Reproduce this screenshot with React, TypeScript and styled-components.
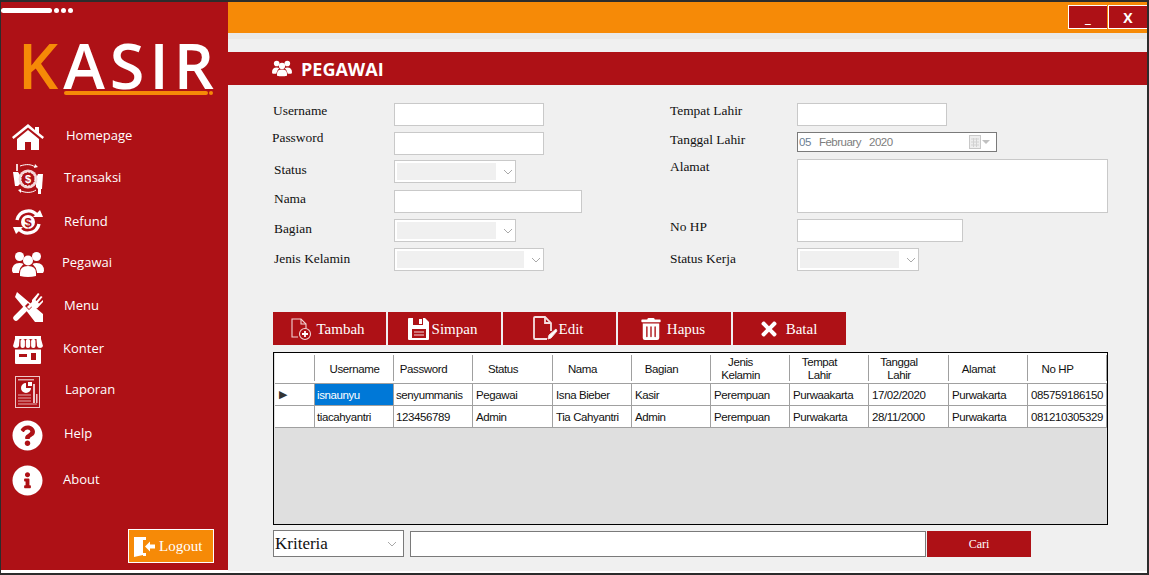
import React from "react";
import styled, { createGlobalStyle } from "styled-components";
import { FaQuestionCircle, FaInfoCircle, FaTrashAlt, FaTimes } from "react-icons/fa";

const Global = createGlobalStyle`
  html, body { margin: 0; padding: 0; background: #2c2c2c; overflow: hidden; }
  * { box-sizing: border-box; }
`;

const RED = "#ae1116";
const ORANGE = "#f68a07";
const LINE = "#c9c9c9";
const SERIF = `"Liberation Serif", serif`;
const SANS = `"Liberation Sans", sans-serif`;

const HomeIcon = () => (
  <svg width="32" height="26" viewBox="0 0 32 26" fill="#fff">
    <path d="M16 0L0 13l1.500 2L16 3.500 30.500 15l1.500-2-5-4V3h-4v3z" />
    <path d="M16 6L5 15v11h8v-8h6v8h8V15z" />
  </svg>
);

const TransaksiIcon = () => (
  <svg width="32" height="32" viewBox="0 0 32 32" fill="none">
    <path d="M1 9h5l2 3v9l-2 2H3z" fill="#fff" />
    <path d="M31 11h-5l-2 4v9l2 2h4z" fill="#fff" />
    <circle cx="16" cy="16" r="9.500" fill="#f3d5d6" />
    <circle cx="16" cy="16" r="7" fill={RED} stroke="#fff" strokeWidth="1" strokeDasharray="2 1" />
    <text x="16" y="20" fontSize="11" fontWeight="700" textAnchor="middle" fill="#fff" fontFamily="Liberation Sans">$</text>
    <path d="M8 3c6-2 11-2 15 1M9 28c5 2 11 2 15-1" stroke="#fff" strokeWidth="1" />
    <path d="M23 1l3 3-4 1zM9 26l-3 1 3 3z" fill="#fff" />
    <rect x="4" y="1" width="2" height="7" fill="#f3d5d6" />
    <rect x="26" y="26" width="3" height="5" fill="#fff" />
  </svg>
);

const RefundIcon = () => (
  <svg width="32" height="28" viewBox="0 0 32 28" fill="none">
    <path d="M5 12A11.500 11.500 0 0 1 25 7" stroke="#fff" strokeWidth="3.400" />
    <path d="M27 16A11.500 11.500 0 0 1 7 21" stroke="#fff" strokeWidth="3.400" />
    <path d="M21 9h10l-3-7zM11 19H1l3 7z" fill="#fff" />
    <circle cx="16" cy="14" r="7" fill="#fff" />
    <text x="16" y="19" fontSize="13" fontWeight="700" textAnchor="middle" fill={RED} fontFamily="Liberation Sans">$</text>
  </svg>
);

const UsersIcon = ({ w = 32 }: { w?: number }) => (
  <svg width={w} height={(w * 26) / 32} viewBox="0 0 32 26" fill="#fff">
    <circle cx="7.500" cy="5.500" r="4.500" />
    <circle cx="24.500" cy="5.500" r="4.500" />
    <path d="M0 20q0-8 7.500-8 2.500 0 4 1-3.500 3-4.500 8v1H1z" />
    <path d="M32 20q0-8-7.500-8-2.500 0-4 1 3.500 3 4.500 8v1h6z" />
    <circle cx="16" cy="9.500" r="5" />
    <path d="M8 25v-3q0-7 8-7t8 7v3q-8 2-16 0z" />
  </svg>
);

const MenuIcon = () => (
  <svg width="30" height="30" viewBox="0 0 30 30" fill="#fff">
    <path d="M4 0L30 22v8h-8L12 17 2 5z" />
    <path d="M3 26l11-11" stroke="#fff" strokeWidth="5.500" strokeLinecap="round" />
    <path d="M12 14l4 4 3-3-4-4z" fill={RED} />
    <path d="M15 16l6-6" stroke="#fff" strokeWidth="3" />
    <path d="M19 8l6-7 1.500 1-4 6 1 1 4.500-5 1.500 1-4.500 5.500 1 1L30 8l.500 1.500-6 6.500q-3 1.500-5.500-1z" />
  </svg>
);

const StoreIcon = () => (
  <svg width="30" height="28" viewBox="0 0 30 28" fill="#fff">
    <rect x="2" y="0" width="26" height="3" />
    <path d="M2 3h4.500l-.5 7q-.5 2-3 2T0 10z" />
    <rect x="7.500" y="3" width="4.400" height="9" rx="2" />
    <rect x="12.800" y="3" width="4.400" height="9" rx="2" />
    <rect x="18.100" y="3" width="4.400" height="9" rx="2" />
    <path d="M28 3h-4.500l.5 7q.5 2 3 2t3-2z" />
    <path d="M2 13.500h26V27q0 1-1 1H3q-1 0-1-1z" />
    <rect x="6" y="18" width="8" height="3" fill={RED} />
    <rect x="18" y="17" width="5" height="7" fill={RED} />
  </svg>
);

const LaporanIcon = () => (
  <svg width="26" height="32" viewBox="0 0 26 32" fill="none">
    <rect x="0.500" y="0.500" width="24" height="31" fill={RED} stroke="#eec7c8" />
    <rect x="3" y="3" width="16" height="1.500" fill="#e3a8aa" />
    <path d="M11 7a5 5 0 1 0 5 5h-5z" fill="#fff" />
    <path d="M13 6h4v4h-4z" fill="#fff" />
    <rect x="18" y="8" width="2" height="19" fill="#eec7c8" />
    <rect x="21" y="18" width="1.500" height="9" fill="#eec7c8" />
    <path d="M3 19h13M3 22h13M3 25h13M3 28h19" stroke="#e3a8aa" strokeWidth="1.200" />
  </svg>
);

const DoorIcon = () => (
  <svg width="21" height="21" viewBox="0 0 21 21" fill="#fff">
    <path d="M0 1h12v3H9v13h3v3H9v-1l-9 2z" />
    <path d="M11 10.500l5-5v3h5v4h-5v3z" />
  </svg>
);

const FilePlusIcon = () => (
  <svg width="24" height="24" viewBox="0 0 24 24" fill="none" stroke="#f3d5d6" strokeWidth="1.100">
    <path d="M8 20H2V2h9l5 5v5" />
    <path d="M11 2v5h5" />
    <circle cx="15" cy="17" r="5.500" fill={RED} />
    <path d="M15 14v6M12 17h6" stroke="#fff" strokeWidth="1.800" />
  </svg>
);

const SaveIcon = () => (
  <svg width="22" height="24" viewBox="0 0 22 24" fill="#fff">
    <path d="M1 1h16l4 4v17q0 1-1 1H1q-1 0-1-1V2q0-1 1-1z" />
    <rect x="5" y="1" width="10" height="7" fill={RED} />
    <rect x="11" y="2" width="3" height="5" fill="#fff" />
    <rect x="4" y="12" width="14" height="9" fill={RED} />
    <path d="M6 15h10M6 18h10" stroke="#f3d5d6" strokeWidth="1.200" />
  </svg>
);

const FileEditIcon = () => (
  <svg width="26" height="26" viewBox="0 0 26 26" fill="none" stroke="#f5dfe0" strokeWidth="1.800">
    <path d="M15 23H3q-1 0-1-1V2q0-1 1-1h10l6 6v8" />
    <path d="M13 1v6h6" />
    <path d="M16 23l1-4 7-6 1 2-6 7z" fill="#fff" strokeWidth="1" />
  </svg>
);

const CalendarIcon = () => (
  <svg width="12" height="14" viewBox="0 0 12 14">
    <rect x="0.500" y="0.500" width="11" height="13" fill="#eeeeee" stroke="#c8c8c8" />
    <path d="M2 4h8M2 7h8M2 10h8M4.500 3v9M7.500 3v9" stroke="#d2d2d2" strokeWidth="1" />
  </svg>
);

const Chevron = () => (
  <svg width="10" height="6" viewBox="0 0 10 6" fill="none">
    <path d="M1 1l4 4 4-4" stroke="#a9a9a9" strokeWidth="1" />
  </svg>
);

const Page = styled.div`
  width: 1149px;
  height: 575px;
  padding: 2px 2px 2px 1px;
`;

const Frame = styled.div`
  height: 571px;
  display: flex;
  background: #fff;
`;

const Sidebar = styled.aside`
  width: 227px;
  height: 568px;
  flex: none;
  background: ${RED};
  display: flex;
  flex-direction: column;
`;

const LoadBar = styled.div`
  height: 5px;
  margin-top: 6px;
  display: flex;
  gap: 2px;
`;

const Dash = styled.span<{ $w: number }>`
  width: ${(p) => p.$w}px;
  height: 5px;
  border-radius: 3px;
  background: #fff;
`;

const Logo = styled.div`
  margin: 26px 0 0 17px;
  font-family: "Open Sans", sans-serif;
  font-weight: 600;
  font-size: 63px;
  line-height: 52px;
  height: 52px;
  color: #fff;
  letter-spacing: 5px;
  white-space: nowrap;
`;

const LogoK = styled.span`
  color: ${ORANGE};
`;

const LogoRule = styled.div`
  margin: 0 0 0 63px;
  display: flex;
  gap: 1px;
  height: 4px;
`;

const RuleBar = styled.span<{ $w: number }>`
  width: ${(p) => p.$w}px;
  height: 4px;
  border-radius: 2px;
  background: ${ORANGE};
`;

const Nav = styled.nav`
  margin-top: 20px;
  display: flex;
  flex-direction: column;
`;

const NavItem = styled.div<{ $h: number }>`
  height: ${(p) => p.$h}px;
  display: flex;
  align-items: center;
  padding-left: 10px;
  color: #fff;
`;

const NavIcon = styled.div`
  width: 33px;
  flex: none;
  display: flex;
  justify-content: center;
`;

const NavLabel = styled.span<{ $x: number; $up?: number }>`
  margin-left: ${(p) => p.$x}px;
  margin-bottom: ${(p) => p.$up || 0}px;
  font-family: "Open Sans", sans-serif;
  font-size: 13px;
  color: #fff;
`;

const LogoutWrap = styled.div`
  margin-top: auto;
  padding: 0 14px 7px 0;
  display: flex;
  justify-content: flex-end;
`;

const LogoutButton = styled.button`
  width: 86px;
  height: 34px;
  padding: 0 0 0 5px;
  background: ${ORANGE};
  border: 1px solid #fff;
  color: #fff;
  display: flex;
  align-items: center;
  gap: 4px;
  font-family: ${SERIF};
  font-size: 15px;
`;

const Main = styled.main`
  flex: 1;
  min-width: 0;
  height: 569px;
  background: #f0f0f0;
  display: flex;
  flex-direction: column;
`;

const TopBar = styled.header`
  height: 31px;
  flex: none;
  background: ${ORANGE};
  padding-top: 3px;
  display: flex;
  justify-content: flex-end;
  align-items: flex-start;
  gap: 1px;
`;

const WinButton = styled.div`
  width: 39px;
  height: 24px;
  background: ${RED};
  border: 1px solid #fff;
  border-right-width: 0;
  color: #fff;
  font-family: "Open Sans", sans-serif;
  font-weight: 700;
  font-size: 14px;
  display: flex;
  align-items: center;
  justify-content: center;
`;

const Strip = styled.div`
  height: 6px;
  background: #e9e9e9;
  flex: none;
`;

const TitleBar = styled.div`
  margin-top: 13px;
  height: 33px;
  flex: none;
  background: ${RED};
  padding-left: 44px;
  display: flex;
  align-items: center;
  gap: 9px;
  color: #fff;
  font-family: "Open Sans", sans-serif;
  font-weight: 700;
  font-size: 18px;
`;

const Form = styled.section`
  margin: 18px 0 0 45px;
  display: flex;
  height: 168px;
`;

const FormColumn = styled.div<{ $w: number; $labelW: number }>`
  width: ${(p) => p.$w}px;
  flex: none;
  display: grid;
  grid-template-columns: ${(p) => p.$labelW}px 1fr;
  align-content: start;
`;

const Label = styled.label<{ $top: number; $x?: number }>`
  margin-top: ${(p) => p.$top}px;
  margin-left: ${(p) => p.$x || 0}px;
  font-family: ${SERIF};
  font-size: 13.4px;
  line-height: 15px;
  color: #111;
`;

const Slot = styled.div<{ $gap?: number }>`
  padding-bottom: ${(p) => p.$gap ?? 6}px;
`;

const TextBox = styled.div<{ $w: number; $h?: number }>`
  width: ${(p) => p.$w}px;
  height: ${(p) => p.$h || 23}px;
  background: #fff;
  border: 1px solid ${LINE};
`;

const SelectBox = styled(TextBox)`
  padding: 2px 2px 2px 2px;
  display: flex;
  align-items: center;
  justify-content: space-between;
`;

const SelectFill = styled.div`
  flex: 1;
  height: 17px;
  margin-right: 7px;
  background: #f0f0f0;
`;

const DateBox = styled.div`
  width: 200px;
  height: 20px;
  background: #fff;
  border: 1px solid #7a7a7a;
  padding: 0 6px 0 1px;
  display: flex;
  align-items: center;
  font-family: ${SANS};
  font-size: 11.500px;
  letter-spacing: -0.500px;
  color: #7d7d7d;
  white-space: pre;
`;

const DateDay = styled.span`
  color: #6b8094;
`;

const DateIcons = styled.div`
  margin-left: auto;
  display: flex;
  align-items: center;
  gap: 1px;
`;

const Caret = styled.span`
  width: 0;
  height: 0;
  border: 4px solid transparent;
  border-top: 4px solid #c0c0c0;
  border-bottom: 0;
`;

const Actions = styled.div`
  margin: 41px 0 0 45px;
  display: flex;
  gap: 2px;
`;

const ActionButton = styled.button<{ $gap?: number }>`
  width: 113px;
  height: 33px;
  padding: 1px 4px 0 0;
  border: 0;
  background: ${RED};
  color: #fff;
  display: flex;
  align-items: center;
  justify-content: center;
  gap: ${(p) => p.$gap ?? 2}px;
  font-family: ${SERIF};
  font-weight: 400;
  font-size: 15px;
`;

const GridBox = styled.div`
  margin: 7px 0 0 45px;
  width: 835px;
  height: 173px;
  background: #dfdfdf;
  border: 1px solid #000;
  padding-left: 1px;
  overflow: hidden;
`;

const Table = styled.table`
  width: 832px;
  table-layout: fixed;
  border-collapse: separate;
  border-spacing: 0;
  font-family: ${SANS};
  font-size: 11.500px;
  color: #111;
  letter-spacing: -0.400px;
`;

const Head = styled.th<{ $w: number; $shift?: number }>`
  width: ${(p) => p.$w}px;
  height: 31px;
  padding: 2px ${(p) => p.$shift ?? 0}px 0 0;
  font-weight: 400;
  line-height: 13px;
  white-space: pre-line;
  text-align: center;
  background: #fff linear-gradient(#a0a0a0, #a0a0a0) right 2px / 1px 26px no-repeat;
  border-bottom: 1px solid #a0a0a0;
`;

const Cell = styled.td<{ $sel?: boolean; $pad?: number }>`
  height: 22px;
  padding: 0 0 0 ${(p) => p.$pad ?? 3}px;
  background: ${(p) => (p.$sel ? "#0078d7" : "#fff")};
  color: ${(p) => (p.$sel ? "#fff" : "#111")};
  border-right: 1px solid #a0a0a0;
  border-bottom: 1px solid #a0a0a0;
  white-space: nowrap;
  overflow: hidden;
`;

const RowHead = styled(Cell)`
  padding: 0 0 0 4px;
  font-size: 11px;
  color: #333;
`;

const Search = styled.div`
  margin: 5px 0 0 45px;
  display: flex;
  align-items: flex-end;
`;

const Criteria = styled.div`
  width: 131px;
  height: 27px;
  background: #fff;
  border: 1px solid #7a7a7a;
  padding: 0 6px 0 1px;
  display: flex;
  align-items: center;
  justify-content: space-between;
  font-family: ${SERIF};
  font-size: 17px;
  color: #111;
`;

const SearchInput = styled.div`
  width: 516px;
  height: 26px;
  margin-left: 6px;
  background: #fff;
  border: 1px solid #7a7a7a;
`;

const SearchButton = styled.button`
  width: 104px;
  height: 26px;
  margin-left: 1px;
  border: 0;
  background: ${RED};
  color: #fff;
  font-family: ${SERIF};
  font-size: 12px;
`;

const menu = [
  { label: "Homepage", h: 43, x: 22, up: 3, icon: <HomeIcon /> },
  { label: "Transaksi", h: 42, x: 20, up: 5, icon: <TransaksiIcon /> },
  { label: "Refund", h: 43, x: 20, up: 1, icon: <RefundIcon /> },
  { label: "Pegawai", h: 42, x: 18, up: 5, icon: <UsersIcon /> },
  { label: "Menu", h: 43, x: 20, up: 3, icon: <MenuIcon /> },
  { label: "Konter", h: 43, x: 19, up: 4, icon: <StoreIcon /> },
  { label: "Laporan", h: 42, x: 21, up: 7, icon: <LaporanIcon /> },
  { label: "Help", h: 44, x: 20, up: 5, icon: <FaQuestionCircle size={31} /> },
  { label: "About", h: 47, x: 19, up: 3, icon: <FaInfoCircle size={31} /> },
];

const columns = [
  { w: 79, t: "Username", shift: 0 },
  { w: 79, t: "Password", shift: 20 },
  { w: 80, t: "Status", shift: 20 },
  { w: 79, t: "Nama", shift: 20 },
  { w: 79, t: "Bagian", shift: 20 },
  { w: 79, t: "Jenis\nKelamin", shift: 20 },
  { w: 79, t: "Tempat\nLahir", shift: 20 },
  { w: 80, t: "Tanggal\nLahir", shift: 20 },
  { w: 79, t: "Alamat", shift: 20 },
  { w: 79, t: "No HP", shift: 20 },
];

const rows = [
  ["isnaunyu", "senyummanis", "Pegawai", "Isna Bieber", "Kasir", "Perempuan", "Purwaakarta", "17/02/2020", "Purwakarta", "085759186150"],
  ["tiacahyantri", "123456789", "Admin", "Tia Cahyantri", "Admin", "Perempuan", "Purwakarta", "28/11/2000", "Purwakarta", "081210305329"],
];

const App = () => {
  return (
    <Page>
      <Global />
      <Frame>
        <Sidebar>
          <LoadBar>
            <Dash $w={51} />
            <Dash $w={5} />
            <Dash $w={5} />
            <Dash $w={5} />
          </LoadBar>
          <Logo>
            <LogoK>K</LogoK>ASIR
          </Logo>
          <LogoRule>
            <RuleBar $w={144} />
            <RuleBar $w={4} />
          </LogoRule>
          <Nav>
            {menu.map((m) => (
              <NavItem key={m.label} $h={m.h}>
                <NavIcon>{m.icon}</NavIcon>
                <NavLabel $x={m.x} $up={m.up}>{m.label}</NavLabel>
              </NavItem>
            ))}
          </Nav>
          <LogoutWrap>
            <LogoutButton>
              <DoorIcon />
              Logout
            </LogoutButton>
          </LogoutWrap>
        </Sidebar>
        <Main>
          <TopBar>
            <WinButton>_</WinButton>
            <WinButton>X</WinButton>
          </TopBar>
          <Strip />
          <TitleBar>
            <UsersIcon w={20} />
            PEGAWAI
          </TitleBar>
          <Form>
            <FormColumn $w={397} $labelW={121}>
              <Label $top={0}>Username</Label>
              <Slot><TextBox $w={150} /></Slot>
              <Label $top={-2} $x={-1}>Password</Label>
              <Slot $gap={5}><TextBox $w={150} /></Slot>
              <Label $top={2} $x={1}>Status</Label>
              <Slot $gap={7}><SelectBox $w={122}><SelectFill /><Chevron /></SelectBox></Slot>
              <Label $top={1} $x={1}>Nama</Label>
              <Slot><TextBox $w={188} /></Slot>
              <Label $top={2} $x={1}>Bagian</Label>
              <Slot><SelectBox $w={122}><SelectFill /><Chevron /></SelectBox></Slot>
              <Label $top={3} $x={1}>Jenis Kelamin</Label>
              <Slot $gap={0}><SelectBox $w={150}><SelectFill /><Chevron /></SelectBox></Slot>
            </FormColumn>
            <FormColumn $w={438} $labelW={127}>
              <Label $top={0}>Tempat Lahir</Label>
              <Slot><TextBox $w={150} /></Slot>
              <Label $top={0}>Tanggal Lahir</Label>
              <Slot $gap={7}>
                <DateBox>
                  <DateDay>05</DateDay>{"   February   2020"}
                  <DateIcons><CalendarIcon /><Caret /></DateIcons>
                </DateBox>
              </Slot>
              <Label $top={0}>Alamat</Label>
              <Slot><TextBox $w={311} $h={54} /></Slot>
              <Label $top={0}>No HP</Label>
              <Slot><TextBox $w={166} /></Slot>
              <Label $top={3}>Status Kerja</Label>
              <Slot $gap={0}><SelectBox $w={122}><SelectFill /><Chevron /></SelectBox></Slot>
            </FormColumn>
          </Form>
          <Actions>
            <ActionButton><FilePlusIcon />Tambah</ActionButton>
            <ActionButton><SaveIcon />Simpan</ActionButton>
            <ActionButton $gap={1}><FileEditIcon />Edit</ActionButton>
            <ActionButton $gap={5}><FaTrashAlt size={22} />Hapus</ActionButton>
            <ActionButton $gap={6}><FaTimes size={22} />Batal</ActionButton>
          </Actions>
          <GridBox>
            <Table>
              <thead>
                <tr>
                  <Head $w={40} />
                  {columns.map((c) => (
                    <Head key={c.t} $w={c.w} $shift={c.shift}>{c.t}</Head>
                  ))}
                </tr>
              </thead>
              <tbody>
                {rows.map((r, i) => (
                  <tr key={r[0]}>
                    <RowHead>{i === 0 ? "▶" : ""}</RowHead>
                    {r.map((v, j) => (
                      <Cell key={j} $sel={i === 0 && j === 0} $pad={j < 2 ? 2 : 3}>{v}</Cell>
                    ))}
                  </tr>
                ))}
              </tbody>
            </Table>
          </GridBox>
          <Search>
            <Criteria>Kriteria<Chevron /></Criteria>
            <SearchInput />
            <SearchButton>Cari</SearchButton>
          </Search>
        </Main>
      </Frame>
    </Page>
  );
};

export default App;
